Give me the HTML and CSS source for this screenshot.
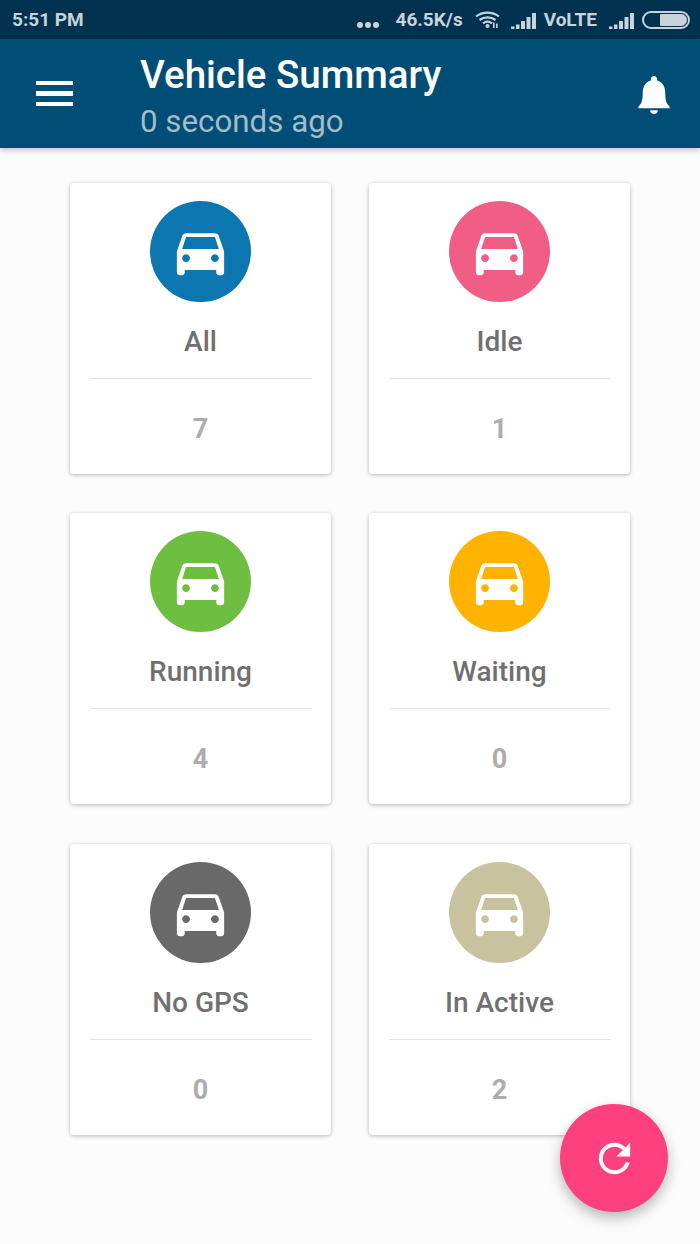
FILE: index.html
```html
<!DOCTYPE html>
<html lang="en">
<head>
    <meta charset="UTF-8">
    <meta name="viewport" content="width=device-width, initial-scale=1.0">
    <title>Vehicle Summary</title>
    <link rel="stylesheet" href="styles.css">
</head>
<body>
    <svg class="defs" width="0" height="0">
        <symbol id="car" viewBox="0 0 24 24">
            <path d="M18.92 6.01C18.72 5.42 18.16 5 17.5 5h-11c-.66 0-1.21.42-1.42 1.01L3 12v8c0 .55.45 1 1 1h1c.55 0 1-.45 1-1v-1h12v1c0 .55.45 1 1 1h1c.55 0 1-.45 1-1v-8l-2.08-5.99zM6.5 16c-.83 0-1.5-.67-1.5-1.5S5.67 13 6.5 13s1.5.67 1.5 1.5S7.33 16 6.5 16zm11 0c-.83 0-1.5-.67-1.5-1.5s.67-1.5 1.5-1.5 1.5.67 1.5 1.5-.67 1.5-1.5 1.5zM5 11l1.5-4.5h11L19 11H5z"/>
        </symbol>
        <symbol id="signal" viewBox="0 0 25 16">
            <path d="M0 13.500h3.500V16H0zM5 11.500h3.500V16H5zM10 8h4v8h-4zM15.500 4h4v12h-4zM21 0h4v16h-4z"/>
        </symbol>
    </svg>

    <!-- Barre de statut -->
    <div class="status-bar">
        <span class="time">5:51 PM</span>
        <div class="status-right">
            <span class="dots"><i></i><i></i><i></i></span>
            <span class="speed">46.5K/s</span>
            <svg class="wifi" viewBox="0 0 25 17">
                <path d="M1 5.500C7.500 .2 17.500 .2 24 5.500M4.500 9c4.800-3.600 11.200-3.600 16 0M8 12.300c2.800-2 6.200-2 9 0" fill="none" stroke="currentColor" stroke-width="2.200"/>
                <circle cx="12.500" cy="15" r="2" fill="currentColor"/>
                <path d="M18 11.500h1.600V17H18zM21 12.500h1.600V17H21z" fill="currentColor"/>
            </svg>
            <svg class="signal"><use href="#signal"/></svg>
            <span class="volte">VoLTE</span>
            <svg class="signal"><use href="#signal"/></svg>
            <span class="battery"><span class="battery-level"></span></span>
        </div>
    </div>

    <!-- Header -->
    <header class="app-bar">
        <div class="menu-icon"><i></i><i></i><i></i></div>
        <div class="titles">
            <h1>Vehicle Summary</h1>
            <p>0 seconds ago</p>
        </div>
        <svg class="bell" viewBox="0 0 32 40">
            <path d="M16 0c1.800 0 3.200 1.400 3.200 3.200v1.300C25 6 27.500 11 27.500 17c0 6 .8 9.500 2 11.500.6 1 1.500 1.800 2.500 2.800v1.700H0v-1.700c1-1 1.900-1.800 2.500-2.800 1.200-2 2-5.500 2-11.500 0-6 2.500-11 8.300-12.500V3.200C12.800 1.400 14.200 0 16 0z"/>
            <path d="M12 35h8c0 2.300-1.800 4-4 4s-4-1.700-4-4z"/>
        </svg>
    </header>

    <!-- Cartes -->
    <main class="cards">
        <div class="card">
            <div class="circle blue"><svg class="car"><use href="#car"/></svg></div>
            <div class="label">All</div>
            <div class="count">7</div>
        </div>
        <div class="card">
            <div class="circle pink"><svg class="car"><use href="#car"/></svg></div>
            <div class="label">Idle</div>
            <div class="count">1</div>
        </div>
        <div class="card">
            <div class="circle green"><svg class="car"><use href="#car"/></svg></div>
            <div class="label">Running</div>
            <div class="count">4</div>
        </div>
        <div class="card">
            <div class="circle amber"><svg class="car"><use href="#car"/></svg></div>
            <div class="label">Waiting</div>
            <div class="count">0</div>
        </div>
        <div class="card">
            <div class="circle grey"><svg class="car"><use href="#car"/></svg></div>
            <div class="label">No GPS</div>
            <div class="count">0</div>
        </div>
        <div class="card">
            <div class="circle khaki"><svg class="car"><use href="#car"/></svg></div>
            <div class="label">In Active</div>
            <div class="count">2</div>
        </div>
    </main>

    <button class="fab">
        <svg viewBox="0 0 24 24"><path d="M17.65 6.35C16.2 4.9 14.21 4 12 4c-4.420 0-7.990 3.580-7.990 8s3.570 8 7.990 8c3.730 0 6.840-2.550 7.730-6h-2.080c-.82 2.330-3.040 4-5.650 4-3.310 0-6-2.690-6-6s2.690-6 6-6c1.660 0 3.140.69 4.220 1.780L13 11h7V4l-2.350 2.350z"/></svg>
    </button>
</body>
</html>
```

FILE: styles.css
```css
* {
    margin: 0;
    padding: 0;
    box-sizing: border-box;
}

body {
    font-family: Roboto, "Liberation Sans", sans-serif;
    background-color: #fcfcfc;
    width: 700px;
    height: 1244px;
    position: relative;
    overflow: hidden;
}

.defs {
    position: absolute;
}

/* Barre de statut */
.status-bar {
    height: 39px;
    background-color: #003250;
    color: #c9d3dc;
    display: flex;
    justify-content: space-between;
    align-items: center;
    padding: 0 10px 0 12px;
    font-size: 19px;
    font-weight: 700;
}

.status-right {
    display: flex;
    align-items: center;
}

.dots {
    display: flex;
    gap: 2px;
    margin-right: 17px;
    margin-top: 10px;
}

.dots i {
    width: 6px;
    height: 6px;
    border-radius: 50%;
    background-color: #c9d3dc;
}

.speed {
    margin-right: 12px;
}

.wifi {
    width: 25px;
    height: 17px;
    margin-right: 11px;
}

.signal {
    width: 25px;
    height: 16px;
    fill: #c9d3dc;
    margin-top: 2px;
}

.volte {
    margin: 0 12px 0 8px;
    font-size: 19px;
}

.battery {
    width: 48px;
    height: 18px;
    border: 2px solid #c9d3dc;
    border-radius: 9px;
    margin-left: 8px;
    padding: 1px;
    display: flex;
    justify-content: flex-end;
}

.battery-level {
    width: 27px;
    background-color: #c9d3dc;
    border-radius: 1px 6px 6px 1px;
}

/* Header */
.app-bar {
    height: 109px;
    background-color: #004d75;
    box-shadow: 0 2px 6px rgba(0, 0, 0, 0.25);
    display: flex;
    align-items: center;
    padding: 0 30px 0 36px;
    color: white;
}

.menu-icon {
    width: 37px;
    display: flex;
    flex-direction: column;
    gap: 6px;
    margin-right: 67px;
}

.menu-icon i {
    height: 4.500px;
    background-color: white;
}

.titles {
    flex: 1;
    padding-top: 6px;
}

.titles h1 {
    font-size: 38.500px;
    font-weight: 500;
    line-height: 44px;
    margin-bottom: 6px;
}

.titles p {
    font-size: 31.300px;
    line-height: 38px;
    color: #a3bccb;
}

.bell {
    width: 32px;
    height: 39px;
    fill: white;
    margin-top: 3px;
}

/* Cartes */
.cards {
    display: grid;
    grid-template-columns: 261px 261px;
    grid-auto-rows: 291px;
    column-gap: 38px;
    row-gap: 39.400px;
    padding: 35px 0 0 70px;
}

.card {
    background-color: white;
    border-radius: 4px;
    box-shadow: 0 1px 4px rgba(0, 0, 0, 0.28);
    display: flex;
    flex-direction: column;
    align-items: center;
    padding-top: 18px;
}

.circle {
    width: 101px;
    height: 101px;
    border-radius: 50%;
    display: flex;
    align-items: center;
    justify-content: center;
}

.car {
    width: 63px;
    height: 63px;
    fill: white;
}

.blue { background-color: #0b76b0; }
.pink { background-color: #f05d85; }
.green { background-color: #6ebf3f; }
.amber { background-color: #ffb300; }
.grey { background-color: #696969; }
.khaki { background-color: #c8c29f; }

.label {
    width: 222px;
    height: 77px;
    padding-top: 24px;
    border-bottom: 1px solid #e4e4e4;
    text-align: center;
    font-size: 28px;
    font-weight: 500;
    line-height: 32px;
    color: #707070;
}

.count {
    margin-top: 34px;
    font-size: 27px;
    font-weight: 700;
    line-height: 32px;
    color: #adadad;
}

/* Bouton flottant */
.fab {
    position: absolute;
    left: 560px;
    top: 1104px;
    width: 108px;
    height: 108px;
    border: none;
    border-radius: 50%;
    background-color: #ff407f;
    box-shadow: 0 6px 14px rgba(0, 0, 0, 0.28);
    display: flex;
    align-items: center;
    justify-content: center;
}

.fab svg {
    width: 47px;
    height: 47px;
    fill: white;
}
```
